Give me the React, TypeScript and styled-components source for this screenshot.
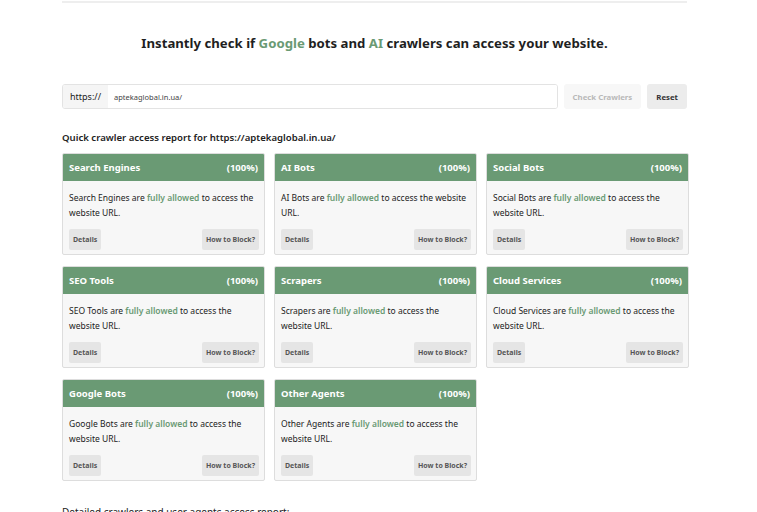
import styled, { createGlobalStyle } from "styled-components";

const GlobalStyle = createGlobalStyle`
  body {
    margin: 0;
    background: #fff;
    font-family: "Noto Sans", "Open Sans", sans-serif;
    color: #222;
  }
`;

const groups = [
  "Search Engines",
  "AI Bots",
  "Social Bots",
  "SEO Tools",
  "Scrapers",
  "Cloud Services",
  "Google Bots",
  "Other Agents",
];

export default function App() {
  return (
    <>
      <GlobalStyle />
      <Page>
        <TopRule />
        <Title>
          Instantly check if <Accent>Google</Accent> bots and <Accent>AI</Accent> crawlers can access your website.
        </Title>
        <Form>
          <InputGroup>
            <Prefix>https://</Prefix>
            <UrlInput defaultValue="aptekaglobal.in.ua/" />
          </InputGroup>
          <Button disabled>Check Crawlers</Button>
          <Button>Reset</Button>
        </Form>
        <Caption strong>Quick crawler access report for https://aptekaglobal.in.ua/</Caption>
        <Grid>
          {groups.map((g) => (
            <Card key={g}>
              <CardHeader>
                <span>{g}</span>
                <span>(100%)</span>
              </CardHeader>
              <CardBody>
                <CardText>
                  {g} are <Allowed>fully allowed</Allowed> to access the website URL.
                </CardText>
                <Actions>
                  <SmallButton>Details</SmallButton>
                  <SmallButton>How to Block?</SmallButton>
                </Actions>
              </CardBody>
            </Card>
          ))}
        </Grid>
        <Caption>Detailed crawlers and user agents access report:</Caption>
      </Page>
    </>
  );
}

const Page = styled.div`
  width: 627px;
  margin-left: 62px;
  padding-top: 1px;
`;

const TopRule = styled.div`
  width: 625px;
  height: 2px;
  background: #eeeeee;
`;

const Title = styled.h1`
  margin: 30px 0 0;
  text-align: center;
  font-size: 13.2px;
  font-weight: 700;
  line-height: 20px;
  color: #1f1f1f;
  padding-right: 2px;
`;

const Accent = styled.span`
  color: #6a9a74;
`;

const Form = styled.div`
  display: flex;
  gap: 6px;
  margin-top: 31px;
  width: 625px;
`;

const InputGroup = styled.div`
  display: flex;
  flex: 1;
  height: 25px;
  border: 1px solid #e3e3e3;
  border-radius: 3px;
  box-sizing: border-box;
  overflow: hidden;
`;

const Prefix = styled.div`
  display: flex;
  align-items: center;
  padding: 0 7px;
  background: #f5f5f5;
  font-size: 9px;
  color: #222;
`;

const UrlInput = styled.input`
  flex: 1;
  border: none;
  outline: none;
  padding: 0 6px;
  font-family: inherit;
  font-size: 7.5px;
  color: #444;
  background: #fff;
`;

const Button = styled.button`
  height: 25px;
  padding: 0 9px;
  border: none;
  border-radius: 3px;
  font-family: inherit;
  font-size: 7.8px;
  font-weight: 700;
  background: ${(p) => (p.disabled ? "#f7f7f7" : "#ececec")};
  color: ${(p) => (p.disabled ? "#b9b9b9" : "#333")};
`;

const Caption = styled.p<{ strong?: boolean }>`
  margin: ${(p) => (p.strong ? "22px" : "24px")} 0 0;
  font-size: ${(p) => (p.strong ? "9.6px" : "10px")};
  font-weight: ${(p) => (p.strong ? 600 : 400)};
  line-height: 14px;
  color: #222;
`;

const Grid = styled.div`
  display: grid;
  grid-template-columns: repeat(3, 203px);
  column-gap: 9px;
  row-gap: 11px;
  margin-top: 8px;
`;

const Card = styled.div`
  border: 1px solid #dddddd;
  border-radius: 2px;
  background: #f7f7f7;
  height: 102px;
  box-sizing: border-box;
  overflow: hidden;
`;

const CardHeader = styled.div`
  display: flex;
  justify-content: space-between;
  align-items: center;
  height: 27px;
  padding: 0 6px;
  background: #6a9a74;
  color: #fff;
  font-size: 9.5px;
  font-weight: 700;
`;

const CardBody = styled.div`
  padding: 9px 5px 0 6px;
`;

const CardText = styled.p`
  margin: 0;
  font-size: 8.5px;
  line-height: 15px;
  color: #222;
`;

const Allowed = styled.span`
  color: #6a9a74;
  font-weight: 600;
`;

const Actions = styled.div`
  display: flex;
  justify-content: space-between;
  margin-top: 9px;
`;

const SmallButton = styled.button`
  height: 21px;
  padding: 0 4px;
  border: none;
  border-radius: 2px;
  background: #e5e5e5;
  font-family: inherit;
  font-size: 7px;
  font-weight: 700;
  color: #555;
`;
